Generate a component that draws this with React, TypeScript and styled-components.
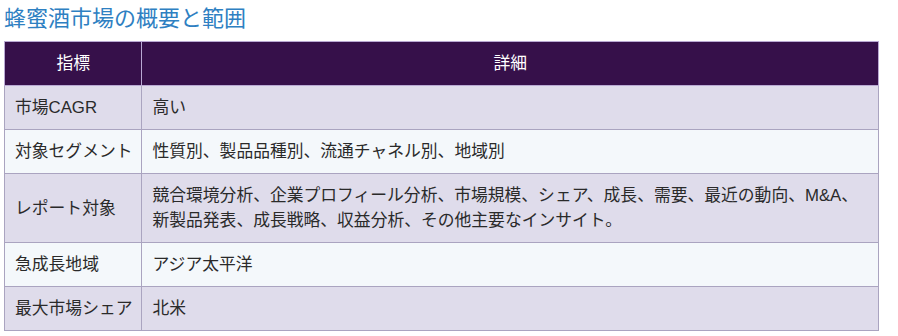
import styled, { createGlobalStyle } from 'styled-components';

const GlobalStyle = createGlobalStyle`
  body {
    margin: 0;
    background: #ffffff;
    font-family: "Noto Sans CJK JP", "Liberation Sans", sans-serif;
  }
`;

const Page = styled.div`
  padding: 0 20px 0 4px;
`;

const Title = styled.h2`
  margin: 0;
  padding: 1px 0 0;
  height: 40px;
  font-size: 22px;
  font-weight: 400;
  line-height: 30px;
  color: #2e80c2;
`;

const Table = styled.table`
  width: 875px;
  border-collapse: collapse;
  font-family: "Liberation Sans", "Noto Sans CJK JP", sans-serif;
  font-size: 16.8px;
  color: #2a2a2a;
`;

const HeadCell = styled.th`
  background: #36104a;
  color: #ffffff;
  font-weight: 400;
  height: 43px;
  padding: 0 10px;
  line-height: 25px;
  border: 1px solid #b9a9d3;
  text-align: center;
`;

const Row = styled.tr<{ $odd: boolean }>`
  background: ${p => (p.$odd ? '#dfdceb' : '#f4f8fb')};
`;

const Cell = styled.td<{ $label?: boolean }>`
  padding: 9px 9px 9px 10px;
  line-height: 25px;
  border: 1px solid #aaa4c0;
  vertical-align: middle;
  width: ${p => (p.$label ? '112px' : 'auto')};
  white-space: ${p => (p.$label ? 'nowrap' : 'normal')};
`;

const rows: [string, string][] = [
  ['市場CAGR', '高い'],
  ['対象セグメント', '性質別、製品品種別、流通チャネル別、地域別'],
  [
    'レポート対象',
    '競合環境分析、企業プロフィール分析、市場規模、シェア、成長、需要、最近の動向、M&A、新製品発表、成長戦略、収益分析、その他主要なインサイト。',
  ],
  ['急成長地域', 'アジア太平洋'],
  ['最大市場シェア', '北米'],
];

export default function App(): JSX.Element {
  return (
    <>
      <GlobalStyle />
      <Page>
        <Title>蜂蜜酒市場の概要と範囲</Title>
        <Table>
          <thead>
            <tr>
              <HeadCell>指標</HeadCell>
              <HeadCell>詳細</HeadCell>
            </tr>
          </thead>
          <tbody>
            {rows.map(([label, value], i) => (
              <Row key={label} $odd={i % 2 === 0}>
                <Cell $label>{label}</Cell>
                <Cell>{value}</Cell>
              </Row>
            ))}
          </tbody>
        </Table>
      </Page>
    </>
  );
}
